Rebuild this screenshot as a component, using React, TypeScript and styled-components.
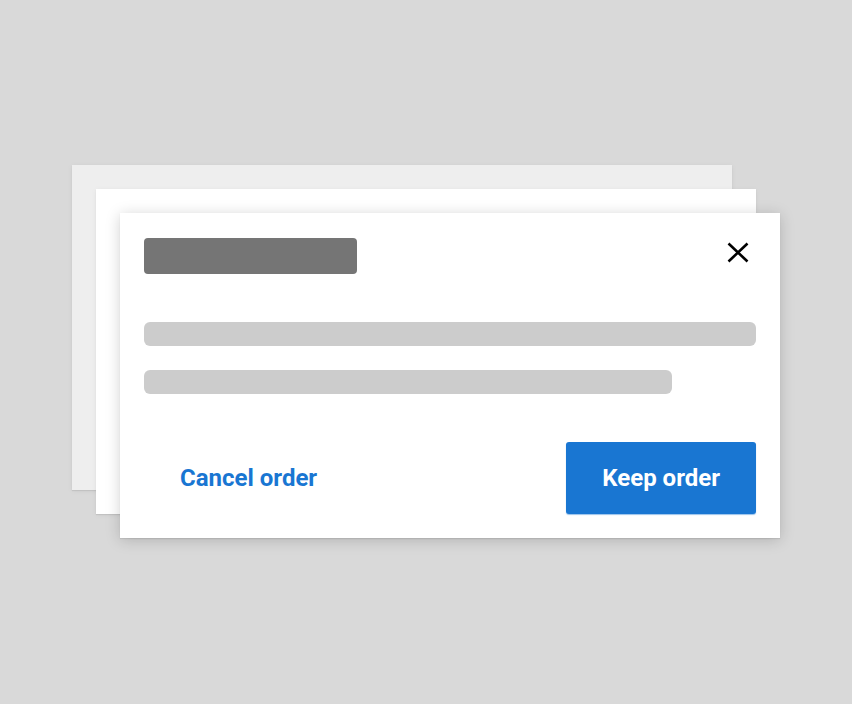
import React from "react";
import styled, { createGlobalStyle } from "styled-components";

const GlobalStyle = createGlobalStyle`
  html, body {
    margin: 0;
    padding: 0;
    background: #d9d9d9;
  }
  body {
    font-family: Roboto, "Liberation Sans", sans-serif;
  }
`;

export const Page = styled.div`
  width: 852px;
  height: 704px;
  box-sizing: border-box;
  padding: 165px 0 0 72px;
`;

export const Stack = styled.div`
  display: grid;
  width: max-content;
`;

export const Card = styled.div<{ $offset: number; $tone: string; $raised?: boolean }>`
  grid-area: 1 / 1;
  width: 660px;
  height: 325px;
  box-sizing: border-box;
  margin: ${(p) => p.$offset}px 0 0 ${(p) => p.$offset}px;
  background: ${(p) => p.$tone};
  box-shadow: ${(p) =>
    p.$raised
      ? "0 1px 1px rgba(0,0,0,0.08), 0 2px 14px rgba(0,0,0,0.18)"
      : "0 1px 1px rgba(0,0,0,0.08), 0 1px 6px rgba(0,0,0,0.05)"};
`;

export const Dialog = styled(Card)`
  display: flex;
  flex-direction: column;
  padding: 25px 24px 24px;
`;

export const Header = styled.div`
  display: flex;
  justify-content: space-between;
  align-items: flex-start;
`;

export const TitleBar = styled.div`
  width: 213px;
  height: 36px;
  border-radius: 4px;
  background: #757575;
`;

export const CloseButton = styled.button`
  display: flex;
  padding: 0;
  margin: 4px 7px 0 0;
  border: none;
  background: none;
  cursor: pointer;
`;

export const Line = styled.div<{ $width: number; $gap: number }>`
  width: ${(p) => p.$width}px;
  height: 24px;
  margin-top: ${(p) => p.$gap}px;
  border-radius: 6px;
  background: #cccccc;
`;

export const Footer = styled.div`
  display: flex;
  justify-content: space-between;
  margin-top: 48px;
`;

export const Button = styled.button<{ $primary?: boolean }>`
  height: 72px;
  padding: 0 36px;
  border: none;
  border-radius: 3px;
  font-family: Roboto, "Liberation Sans", sans-serif;
  font-size: 24px;
  font-weight: 700;
  color: ${(p) => (p.$primary ? "#ffffff" : "#1976d2")};
  background: ${(p) => (p.$primary ? "#1976d2" : "transparent")};
  box-shadow: ${(p) => (p.$primary ? "0 1px 1px rgba(25,118,210,0.45)" : "none")};
  cursor: pointer;
`;

const CloseIcon: React.FC = () => (
  <svg width="22" height="21" viewBox="0 0 22 21" fill="none">
    <path d="M1.5 1.5 L20.5 19.5 M20.5 1.5 L1.5 19.5" stroke="#000" strokeWidth="2.6" />
  </svg>
);

const App: React.FC = () => {
  return (
    <Page>
      <GlobalStyle />
      <Stack>
        <Card $offset={0} $tone="#eeeeee" />
        <Card $offset={24} $tone="#ffffff" />
        <Dialog $offset={48} $tone="#ffffff" $raised>
          <Header>
            <TitleBar />
            <CloseButton aria-label="Close">
              <CloseIcon />
            </CloseButton>
          </Header>
          <Line $width={612} $gap={48} />
          <Line $width={528} $gap={24} />
          <Footer>
            <Button>Cancel order</Button>
            <Button $primary>Keep order</Button>
          </Footer>
        </Dialog>
      </Stack>
    </Page>
  );
};

export default App;
